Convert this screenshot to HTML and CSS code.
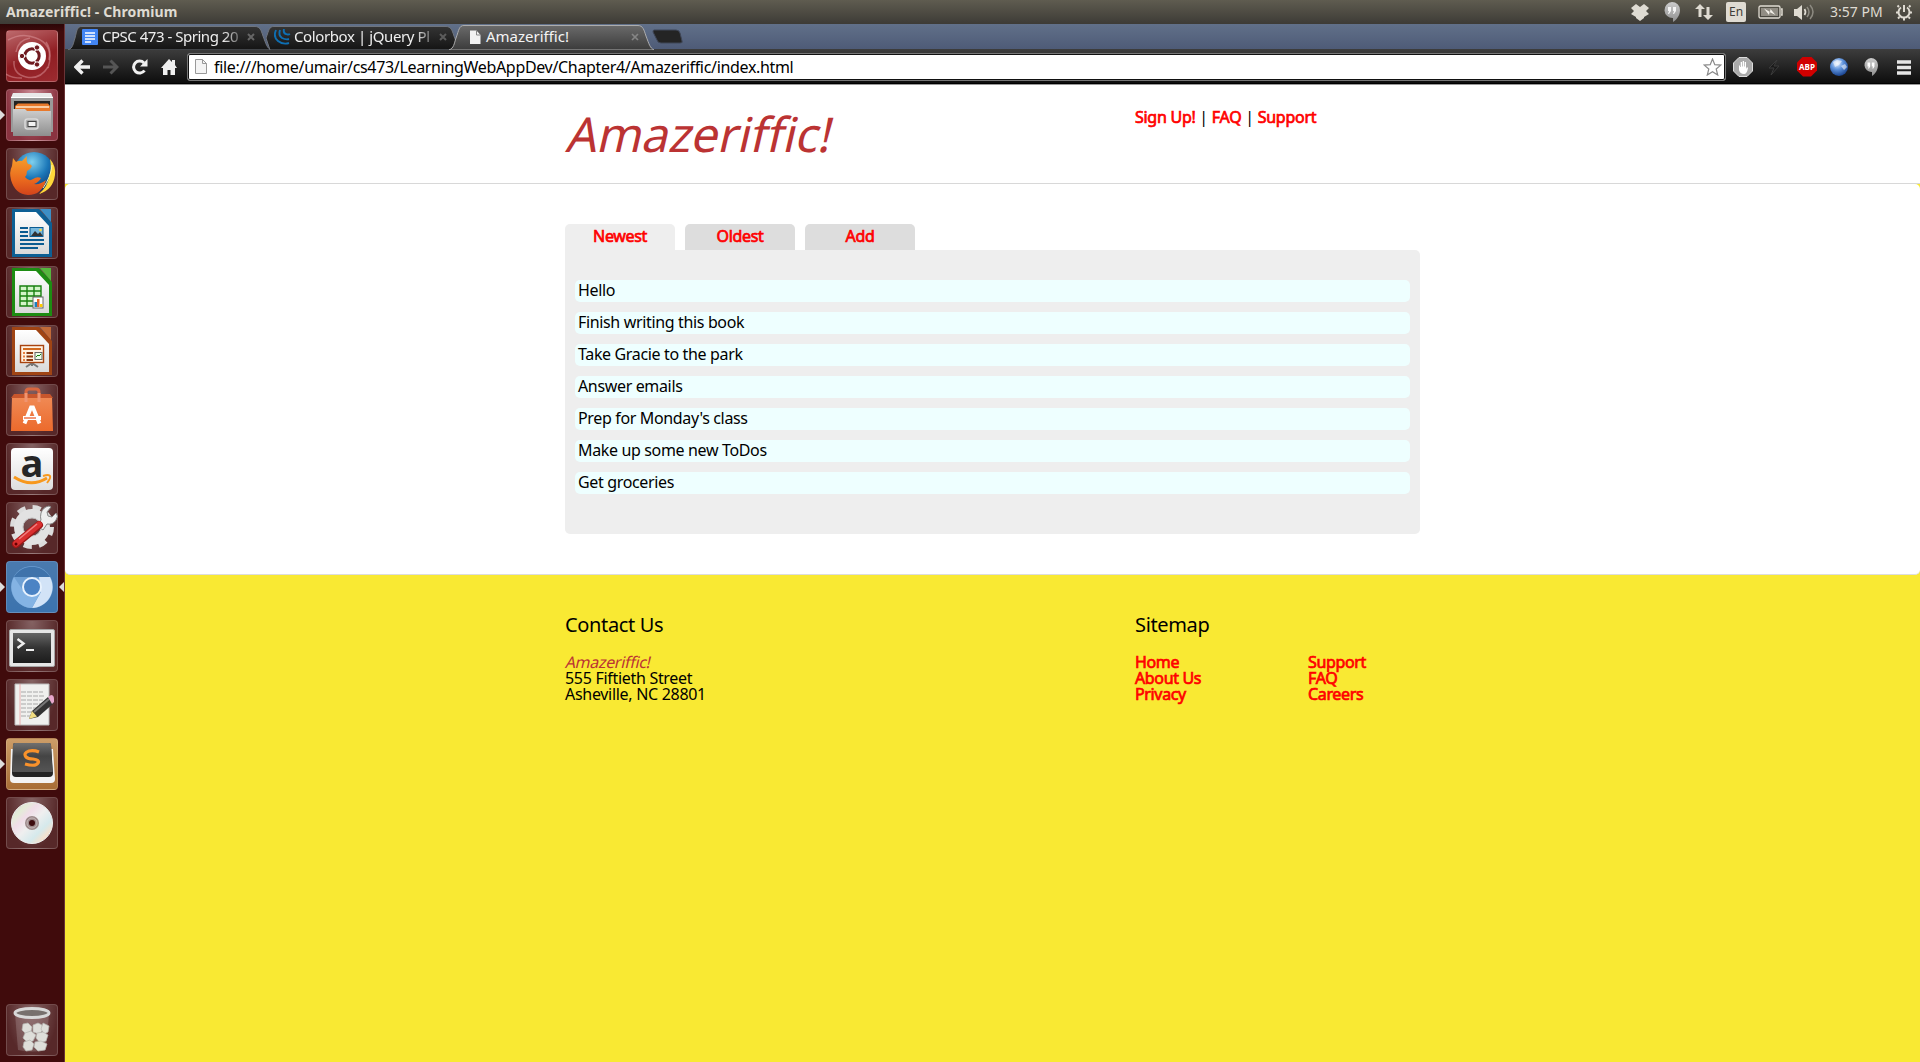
FILE: index.html
```html
<!DOCTYPE html>
<html lang="en">
<head>
<meta charset="utf-8">
<title>Amazeriffic!</title>
<link rel="stylesheet" href="styles.css">
</head>
<body>
<svg class="defs" width="0" height="0">
  <defs>
    <linearGradient id="tabDark" x1="0" y1="0" x2="0" y2="1"><stop offset="0" stop-color="#343434"/><stop offset="1" stop-color="#141414"/></linearGradient>
    <linearGradient id="tabLight" x1="0" y1="0" x2="0" y2="1"><stop offset="0" stop-color="#6a6a6a"/><stop offset="1" stop-color="#3b3b3b"/></linearGradient>
    <linearGradient id="steel" x1="0" y1="0" x2="0" y2="1"><stop offset="0" stop-color="#cfcfcf"/><stop offset="1" stop-color="#8e8e8e"/></linearGradient>
    <linearGradient id="paper" x1="0" y1="0" x2="0" y2="1"><stop offset="0" stop-color="#fff"/><stop offset="1" stop-color="#d9d9d9"/></linearGradient>
    <linearGradient id="bag" x1="0" y1="0" x2="0" y2="1"><stop offset="0" stop-color="#f08a55"/><stop offset="1" stop-color="#ec6a2c"/></linearGradient>
    <linearGradient id="screen" x1="0" y1="0" x2="0" y2="1"><stop offset="0" stop-color="#666"/><stop offset=".5" stop-color="#333"/><stop offset="1" stop-color="#1c1c1c"/></linearGradient>
    <radialGradient id="globe" cx=".45" cy=".25" r=".8"><stop offset="0" stop-color="#7fd0ee"/><stop offset=".5" stop-color="#1b77b8"/><stop offset="1" stop-color="#0b2a66"/></radialGradient>
    <linearGradient id="fox" x1="0" y1="0" x2="0" y2="1"><stop offset="0" stop-color="#f6a12c"/><stop offset=".6" stop-color="#ea6a1e"/><stop offset="1" stop-color="#d2431b"/></linearGradient>
    <linearGradient id="disc" x1="0" y1="0" x2="1" y2="1"><stop offset="0" stop-color="#d8d8d8"/><stop offset=".22" stop-color="#e4ecd8"/><stop offset=".34" stop-color="#f0dde8"/><stop offset=".5" stop-color="#efefef"/><stop offset=".7" stop-color="#d5e9ec"/><stop offset=".82" stop-color="#f3e2cf"/><stop offset="1" stop-color="#dcdcdc"/></linearGradient>
    <radialGradient id="world" cx=".4" cy=".3" r=".75"><stop offset="0" stop-color="#e8f2ff"/><stop offset=".45" stop-color="#5f93dc"/><stop offset="1" stop-color="#123a86"/></radialGradient>
    <linearGradient id="sublime" x1="0" y1="0" x2="0" y2="1"><stop offset="0" stop-color="#6f6f6f"/><stop offset=".45" stop-color="#444"/><stop offset="1" stop-color="#555"/></linearGradient>
    <linearGradient id="bubble" x1="0" y1="0" x2="0" y2="1"><stop offset="0" stop-color="#ccc"/><stop offset="1" stop-color="#8f8f8f"/></linearGradient>
  </defs>
</svg>

<header class="menubar">
  <span class="window-title">Amazeriffic! - Chromium</span>
  <div class="indicators">
    <svg width="20" height="24"><path d="M1 8l5-4 4 3 4-3 5 4-3 3 3 3-5 3v1l-4 3-4-3v-1l-5-3 3-3z" fill="#dfdbd2"/></svg>
    <svg width="18" height="24"><path d="M9 2a8 8 0 0 1 8 8c0 6-4 10-7 12v-4A8 8 0 1 1 9 2z" fill="url(#bubble)"/><path d="M5 7h3v4l-2 3H5l1-3H5zM10 7h3v4l-2 3h-1l1-3h-1z" fill="#f4f4f4"/></svg>
    <svg width="18" height="24"><path d="M5 4L0 9h3.500v8h3V9H10zM13 20l5-5h-3.500V7h-3v8H8z" fill="#dfdbd2"/></svg>
    <span class="lang">En</span>
    <svg width="25" height="24"><rect x="1" y="6" width="21" height="12" rx="1.500" fill="none" stroke="#dfdbd2" stroke-width="1.300"/><rect x="3" y="8" width="17" height="8" fill="#918d84"/><path d="M23 9h1v6h-1" fill="none" stroke="#dfdbd2" stroke-width="1.500"/><path d="M6 8.500l6 3.500.500-3 5 6-6-3-.5 3z" fill="#f2efe8"/></svg>
    <svg width="21" height="24"><path d="M0 9h3l5-4v15l-5-4H0z" fill="#dfdbd2"/><path d="M10.500 9q2 3 0 6" fill="none" stroke="#dfdbd2" stroke-width="1.700"/><path d="M13 7q4 5 0 10M16 5q6 7 0 14" fill="none" stroke="#8d8a81" stroke-width="1.500"/></svg>
    <span class="clock">3:57 PM</span>
    <svg width="18" height="24"><path d="M6 7.500a5.500 5.500 0 1 0 6 0M9 5v7" fill="none" stroke="#dfdbd2" stroke-width="2"/><path d="M4 7L2.500 5.500M14 7l1.500-1.500M3 12.500H1M15 12.500h2M4.500 17L3 18.500M13.500 17l1.500 1.500M9 18v2.500" stroke="#dfdbd2" stroke-width="2"/></svg>
  </div>
</header>

<div class="desktop">
  <nav class="launcher">
    <div class="tile tile-dash"><svg viewBox="0 0 52 52"><g fill="none" stroke="#e5a5a8" stroke-opacity=".45" stroke-width="1.500"><path d="M2 10q14-8 28-2 16 6 13 22"/><path d="M8 31q-1 13 12 16 14 3 22-10"/><path d="M10 22q2-12 14-14M0 44q6 4 16 4M40 12q7 10 2 26"/></g><circle cx="26" cy="26" r="14" fill="#fff"/><circle cx="26" cy="26" r="7.200" fill="none" stroke="#6f1a20" stroke-width="3"/><path d="M26 26L12 26M26 26l7 12M26 26l7-12" stroke="#fff" stroke-width="1.200"/><g fill="#6f1a20" stroke="#fff"><circle cx="16" cy="26" r="2.700"/><circle cx="31" cy="34.500" r="2.700"/><circle cx="31" cy="17.500" r="2.700"/></g><circle cx="26" cy="26" r="5" fill="#fff"/></svg></div>
    <div class="tile tile-files running"><svg viewBox="0 0 52 52"><path d="M7 4h38l2 5v34H5V9z" fill="#9a9a9a"/><path d="M7 4h38l2 5H5z" fill="#e9e9e9"/><path d="M5 8.500h42" stroke="#fff"/><path d="M8 12h36v12H8z" fill="#222"/><path d="M9 17l3-2.500h30l2 2.500v5H9z" fill="#e8792b"/><path d="M10 18h33" stroke="#ffe8cc" stroke-width="1.500"/><path d="M7 20h12l2 2h24v25H7z" fill="url(#steel)"/><rect x="19" y="30" width="13" height="10" rx="2.500" fill="#aaa" stroke="#d9d9d9" stroke-width="1.500"/><rect x="22" y="32.500" width="8" height="5" fill="#f2f2f2" stroke="#444"/></svg></div>
    <div class="tile"><svg viewBox="0 0 52 52"><circle cx="28" cy="24" r="20" fill="url(#globe)"/><path d="M44 11q6 7 5 16-2 15-16 19 9-8 10-17 3-8 1-18z" fill="#ffd83a"/><path d="M46 17q-1 12-9 23" fill="none" stroke="#fff3a8"/><path d="M7 10l3 4q3-2 6-1l5-5q-1 5 1 8 3 0 4 2-1 3-5 5 0 4-2 6 4 5 8 2 4-3 8-1-2 4-7 6 6 1 12-4-4 15-18 15Q9 46 5 32 3 24 6 18z" fill="url(#fox)"/></svg></div>
    <div class="tile"><svg viewBox="0 0 52 52"><path d="M6 2h27l13 14v34H6z" fill="#0d5f94"/><path d="M9 5h21l13 14v28H9z" fill="url(#paper)"/><path d="M34 2h11v13z" fill="#3c8fc6"/><g stroke="#0b5c91" stroke-width="1.800"><path d="M14 21h8M14 25h8M14 29h8M14 33h24M14 37h24M14 41h18"/></g><rect x="24" y="20.500" width="13" height="9" fill="#79b9dd" stroke="#0b5c91"/><path d="M25 29l4-5 3 3 2-2 3 4z" fill="#333"/><circle cx="34.500" cy="23" r="1.300" fill="#ffd83a"/></svg></div>
    <div class="tile"><svg viewBox="0 0 52 52"><path d="M6 2h27l13 14v34H6z" fill="#1d8c12"/><path d="M9 5h21l13 14v28H9z" fill="url(#paper)"/><path d="M34 2h11v13z" fill="#55b73d"/><rect x="14" y="20" width="21" height="20" fill="#d3f5c8"/><path d="M14 20h21v20H14zM14 25h21M14 30h21M14 35h21M21 20v20M28 20v20" fill="none" stroke="#18800f" stroke-width="1.400"/><rect x="27" y="31" width="10" height="11" fill="#fff" stroke="#666"/><path d="M28.500 36h2.500v5h-2.500z" fill="#1d7fc0"/><path d="M31 33h2.500v8H31z" fill="#e8682b"/><path d="M34 38h2.500v3H34z" fill="#fc0"/></svg></div>
    <div class="tile"><svg viewBox="0 0 52 52"><path d="M6 2h27l13 14v34H6z" fill="#a04414"/><path d="M9 5h21l13 14v28H9z" fill="url(#paper)"/><path d="M34 2h11v13z" fill="#c26a38"/><path d="M26 38l-6 4M26 38l6 4M26 37v4" stroke="#777" stroke-width="2"/><rect x="14.500" y="20.500" width="23" height="17" fill="#fff2e2" stroke="#a8430f" stroke-width="1.400"/><path d="M17 24h18" stroke="#d2691e" stroke-width="2"/><path d="M17 28h2M17 31.500h2M17 35h2" stroke="#e88040" stroke-width="2"/><path d="M20.500 28H27M20.500 31.500H27M20.500 35H27" stroke="#8c3a10" stroke-width="2"/><rect x="29" y="27.500" width="7" height="7" fill="#eaffea" stroke="#666"/><path d="M30 32l2-2 1 1 2-2" fill="none" stroke="#18800f"/></svg></div>
    <div class="tile"><svg viewBox="0 0 52 52"><path d="M20 12V8q0-3 3-3h7q3 0 3 3v4" fill="none" stroke="#d9673f" stroke-width="3"/><path d="M6 13h40l1 34H5z" fill="url(#bag)"/><path d="M5 14l3-4h36l3 4z" fill="#c8562c"/><path d="M20 18V9M33 18V9" stroke="#f09470" stroke-width="3"/><path d="M18.500 39.500l6.500-16h2l6.500 16M17 34h18" fill="none" stroke="#fff" stroke-width="3.800"/><path d="M18 34h12" stroke="#e95420" stroke-width="1.200"/></svg></div>
    <div class="tile tile-letter"><span>a</span><svg viewBox="0 0 52 52"><path d="M8 34q17 11 33 1" fill="none" stroke="#f7981d" stroke-width="3"/><path d="M37 33q6-2 7 0t-3 7" fill="none" stroke="#f7981d" stroke-width="2"/></svg></div>
    <div class="tile"><svg viewBox="0 0 52 52"><circle cx="26" cy="25" r="19" fill="none" stroke="#dcdcdc" stroke-width="6" stroke-dasharray="8 6.920"/><circle cx="26" cy="25" r="13.500" fill="none" stroke="#e2e2e2" stroke-width="9"/><circle cx="26" cy="25" r="9" fill="none" stroke="#bdbdbd"/><path d="M31 24l4-6q-1-3 0-7 2-6 8-7l2 1-4 5 1 4 4 1 4-4q3 3 0 7-3 5-9 4l-4 6z" fill="#eee" stroke="#888"/><path d="M33 23L10 42" stroke="#9e1616" stroke-width="8" stroke-linecap="round"/><path d="M33 22.500L10 41.500" stroke="#d92f2f" stroke-width="6" stroke-linecap="round"/><path d="M31 22L13 37" stroke="#f08080" stroke-width="1.500"/><circle cx="10" cy="42" r="1.500" fill="#600"/></svg></div>
    <div class="tile tile-chromium running focused"><svg viewBox="0 0 52 52"><circle cx="26" cy="26" r="21" fill="#6ea0d4"/><path d="M8 16a21 21 0 0 1 36 0H26z" fill="#3f73ab"/><path d="M44 16a21 21 0 0 1-18 31l9-16-2-15z" fill="#d2e3f7"/><path d="M8 16a21 21 0 0 0 18 31l8-15-16-1z" fill="#84b3e4"/><circle cx="26" cy="26" r="9" fill="#4b83c4" stroke="#e8f2fd" stroke-width="2"/></svg></div>
    <div class="tile"><svg viewBox="0 0 52 52"><rect x="3.500" y="9.500" width="45" height="37" rx="1.500" fill="#e6e6e6" stroke="#a5a5a5"/><rect x="7" y="13" width="38" height="30" fill="url(#screen)"/><path d="M11.500 19l6 4.500-6 4.500" fill="none" stroke="#eee" stroke-width="2.400"/><path d="M20 30h8" stroke="#eee" stroke-width="2"/></svg></div>
    <div class="tile"><svg viewBox="0 0 52 52"><path d="M9 5h34v41H9z" fill="#f0f0ee" stroke="#bbb"/><path d="M14 5v41" stroke="#eaa0a0" stroke-width=".8"/><path d="M15 13h22M15 17h23M15 21h22M15 25h20M15 29h18M15 33h12M15 37h10" stroke="#a8a8a8" stroke-dasharray="5 1"/><path d="M23 40l3-8 16-14 6 6-16 14z" fill="#333"/><path d="M23 40l3-8 5 5.500z" fill="#f0dc80"/><path d="M28 33l15-13" stroke="#777" stroke-width="2"/><path d="M42 18l3-2q3 0 3 4v3l-2 2z" fill="#e7a7cb"/></svg></div>
    <div class="tile tile-sublime running"><svg viewBox="0 0 52 52"><path d="M5 11h42l2 30q0 4-4 4H8q-4 0-4-4z" fill="#f3f3f3"/><path d="M9 5h34q2 0 2 2l2 28q0 4-4 4H10q-4 0-4-4L7 7q0-2 2-2z" fill="#242424"/><path d="M9 5h34q2 0 2 2l1.500 27H6.500L7 7q0-2 2-2z" fill="url(#sublime)"/><path d="M33 14q-5-2-10-1-6 2-3 6 2 2 7 2 7 1 5 4-2 4-13 1" fill="none" stroke="#f9922b" stroke-width="3.200"/></svg></div>
    <div class="tile"><svg viewBox="0 0 52 52"><circle cx="26" cy="26" r="20.500" fill="url(#disc)" stroke="#eee"/><circle cx="26" cy="26" r="7" fill="#9c8a8b"/><circle cx="26" cy="26" r="5" fill="none" stroke="#c5b7b8"/><circle cx="26" cy="26" r="3" fill="#3d0c0f"/></svg></div>
    <div class="tile tile-trash"><svg viewBox="0 0 52 52"><path d="M9 10l3 36q14 3 28 0l3-36z" fill="#fff" fill-opacity=".16"/><g fill="#deded9" stroke="#b5b5b0" stroke-width=".7"><path d="M17 20l5-1 4 4-1 5-5 2-4-4z"/><path d="M27 21l5-2 4 2 1 5-4 4-6-2z"/><path d="M37 19l6 3-1 6-4 2-3-5z"/><path d="M19 29l6-2 5 4-3 6-6 1-4-4z"/><path d="M31 29l6-1 5 3-2 6-6 2-4-5z"/><path d="M18 38l6-2 4 4-2 6-6 1-3-4z"/><path d="M29 38l6-1 6 3-2 6-7 1-4-4z"/></g><ellipse cx="26" cy="9" rx="17" ry="4.500" fill="#77706d" stroke="#d8d8d8" stroke-width="3"/></svg></div>
  </nav>

  <section class="browser">
    <div class="tabstrip">
      <div class="tab tab-first">
        <svg class="tab-shape" viewBox="0 0 206 26"><path d="M0 26C5 24 5 20 7 14 9 6 9 2.500 14 2.500H187C192 2.500 193 6 195 12 198 20 199 24 203 26z" fill="url(#tabDark)" stroke="#6f747c"/></svg>
        <svg class="favicon" width="16" height="16"><rect width="16" height="16" rx="1" fill="#4285f4"/><path d="M3 4h10M3 7h10M3 10h10M3 13h6" stroke="#fff" stroke-width="1.300"/></svg>
        <span class="tab-text tight faded">CPSC 473 - Spring 20</span>
        <svg class="close" width="8" height="8"><path d="M1 1l6 6M7 1L1 7" stroke="#666" stroke-width="2"/></svg>
      </div>
      <div class="tab tab-second">
        <svg class="tab-shape" viewBox="0 0 206 26"><path d="M4 26 0 14C3 6 3 2.500 8 2.500H180C185 2.500 186 6 188 12 191 20 192 24 196 26z" fill="url(#tabDark)" stroke="#6f747c"/></svg>
        <svg class="favicon" width="17" height="16"><g fill="none" stroke="#0e6fb3" stroke-width="1.900"><path d="M2 1q-3 7 2 11 5 4 11 2"/><path d="M6 1q-2 5 2 8 4 2 7 1"/><path d="M10 0q-1 4 2 5 2 1 4 0"/></g></svg>
        <span class="tab-text tight faded">Colorbox | jQuery Pl</span>
        <svg class="close" width="8" height="8"><path d="M1 1l6 6M7 1L1 7" stroke="#5c5c5c" stroke-width="2"/></svg>
      </div>
      <div class="tab tab-active">
        <svg class="tab-shape" viewBox="0 0 206 26"><path d="M0 26C5 24 5 20 7 14 10 6 10 1.500 15 1.500H189C194 1.500 195 6 197 12 200 20 201 24 205 26z" fill="url(#tabLight)" stroke="#adadad"/></svg>
        <svg class="favicon" width="12" height="14"><path d="M1 .5h6.500L11.500 5v9H1z" fill="#f2f2f2"/><path d="M7.500.500V5h4" fill="none" stroke="#888"/></svg>
        <span class="tab-text">Amazeriffic!</span>
        <svg class="close" width="8" height="8"><path d="M1 1l6 6M7 1L1 7" stroke="#858585" stroke-width="1.700"/></svg>
      </div>
      <svg class="newtab" width="31" height="16"><path d="M2 1h22q3 0 4 3l2 8q1 2-2 2H9q-3 0-4-3L1 3q0-2 1-2z" fill="#242424" stroke="#3f4656"/></svg>
    </div>

    <div class="toolbar">
      <div class="nav-icons">
        <svg width="16" height="16"><path d="M8.500 1.500L2 8l6.500 6.500M2.500 8H16" fill="none" stroke="#f0f0f0" stroke-width="3.400"/></svg>
        <svg width="16" height="16"><path d="M7.500 1.500L14 8l-6.500 6.500M13.500 8H0" fill="none" stroke="#555" stroke-width="3"/></svg>
        <svg width="16" height="16"><path d="M12.500 11.500A6 6 0 1 1 12 4" fill="none" stroke="#f0f0f0" stroke-width="3"/><path d="M15.500 0v7.500H8z" fill="#f0f0f0"/></svg>
        <svg width="16" height="16"><path d="M8 0l3 3V1h3v5l2 3h-2v7H9.500v-5h-3v5H2V9H0z" fill="#f0f0f0"/></svg>
      </div>
      <div class="omnibox">
        <svg class="page-icon" width="12" height="15"><path d="M.5.5h7l4 4v10H.500z" fill="#f4f4f4" stroke="#999"/><path d="M7.500.500v4h4" fill="none" stroke="#999"/></svg>
        <span class="url">file:///home/umair/cs473/LearningWebAppDev/Chapter4/Amazeriffic/index.html</span>
        <svg width="19" height="18"><path d="M9.500 1l2.300 5.700 6 .4-4.600 3.900 1.500 6-5.200-3.300L4.300 17l1.500-6L1.200 7.100l6-.4z" fill="#fff" stroke="#8a8a8a" stroke-width="1.200"/></svg>
      </div>
      <div class="extensions">
        <svg width="20" height="20"><path d="M6 .5h8L19.500 6v8L14 19.500H6L.500 14V6z" fill="#aaa" stroke="#ddd"/><path d="M6 9v4q1 4 5 4 3 0 4-6l-1-1-1 2V5h-1.300v4.500h-.7V4H9.700v5.500H9V5H7.700v5H7V8z" fill="#fff"/></svg>
        <svg width="12" height="18"><path d="M9 2L1 10h5l-3 7 8-9H6z" fill="#1a1a1a" stroke="#3b3b3b"/></svg>
        <div class="abp">ABP</div>
        <svg width="20" height="20"><circle cx="10" cy="10" r="9" fill="url(#world)"/><path d="M4 5l4-2 5 1-3 4-4 2zM12 9l4-2 2 3-3 3z" fill="#fff" fill-opacity=".55"/></svg>
        <svg width="16" height="20"><path d="M8 1a7 7 0 0 1 7 7c0 5-3 9-6 11v-4A7 7 0 1 1 8 1z" fill="url(#bubble)"/><path d="M4.500 5.500h2.700v4L6 11.500H5l.7-2H4.500zM8.800 5.500h2.700v4l-1.200 2h-1l.7-2H8.800z" fill="#fff"/></svg>
        <svg width="14" height="16"><path d="M0 3h14M0 8.500h14M0 14h14" stroke="#e6e6e6" stroke-width="3.400"/></svg>
      </div>
    </div>

    <div class="page">
      <header class="site-header">
        <div class="container header-row">
          <h1><span class="oblique">Amazeriffic!</span></h1>
          <nav class="links"><a>Sign Up!</a> | <a>FAQ</a> | <a>Support</a></nav>
        </div>
      </header>
      <main>
        <div class="container">
          <div class="tabs"><a class="active">Newest</a><a>Oldest</a><a>Add</a></div>
          <ul class="content">
            <li>Hello</li>
            <li>Finish writing this book</li>
            <li>Take Gracie to the park</li>
            <li>Answer emails</li>
            <li>Prep for Monday's class</li>
            <li>Make up some new ToDos</li>
            <li>Get groceries</li>
          </ul>
        </div>
      </main>
      <footer>
        <div class="container footer-row">
          <div class="contact">
            <h2>Contact Us</h2>
            <p><span class="oblique brand">Amazeriffic!</span></p>
            <p>555 Fiftieth Street</p>
            <p>Asheville, NC 28801</p>
          </div>
          <div class="sitemap">
            <h2>Sitemap</h2>
            <div class="columns">
              <div><a>Home</a><a>About Us</a><a>Privacy</a></div>
              <div><a>Support</a><a>FAQ</a><a>Careers</a></div>
            </div>
          </div>
        </div>
      </footer>
    </div>
  </section>
</div>
</body>
</html>
```
FILE: styles.css
```css
* { box-sizing: border-box; margin: 0; padding: 0; }
body {
  width: 1920px;
  height: 1062px;
  overflow: hidden;
  display: flex;
  flex-direction: column;
  font-family: "Noto Sans", "Open Sans", sans-serif;
}
svg { display: block; flex: none; }
.defs { position: absolute; }

/* Top panel */
.menubar {
  height: 24px;
  flex: none;
  display: flex;
  align-items: center;
  justify-content: space-between;
  padding: 0 7px 0 6px;
  background: linear-gradient(#5f5c50, #3d3b36);
  color: #dfdbd2;
  line-height: 24px;
}
.window-title { font-size: 14px; font-weight: bold; letter-spacing: .12px; }
.indicators { display: flex; align-items: center; }
.indicators svg:nth-child(1) { margin-right: 13px; }
.indicators svg:nth-child(2) { margin-right: 14px; }
.indicators svg:nth-child(3) { margin-right: 13px; }
.lang {
  width: 20px;
  height: 20px;
  margin-right: 12px;
  border-radius: 2px;
  background: #dfdbd2;
  color: #3f3d38;
  font-size: 12px;
  line-height: 20px;
  text-align: center;
}
.indicators svg:nth-child(5) { margin-right: 11px; }
.indicators svg:nth-child(6) { margin-right: 15px; }
.clock { width: 65px; font-size: 14px; white-space: nowrap; }

.desktop { flex: 1; display: flex; min-height: 0; }

/* Launcher */
.launcher {
  width: 65px;
  flex: none;
  display: flex;
  flex-direction: column;
  gap: 7px;
  padding: 6px;
  background: linear-gradient(#2c0607, #400b0c 8px);
  border-right: 1px solid #6b3437;
}
.tile {
  position: relative;
  width: 52px;
  height: 52px;
  flex: none;
  border: 1px solid rgba(255, 255, 255, .16);
  border-radius: 4px;
  background: radial-gradient(ellipse at 50% 0, rgba(255, 255, 255, .36), rgba(255, 255, 255, .12) 75%);
}
.tile svg { width: 52px; height: 52px; margin: -1px; }
.tile-dash { background: linear-gradient(160deg, #bd6a6d, #8f1d22 55%, #9c2b30); }
.tile-files { background: radial-gradient(ellipse at 50% 0, #c98992, #8a3340 75%); }
.tile-chromium { background: linear-gradient(#4a7aae, #3c73ae); }
.tile-sublime { background: linear-gradient(#cc9d68, #a86d35); }
.tile-trash { margin-top: auto; }
.tile-letter span {
  position: absolute;
  left: 4px;
  top: 4px;
  width: 42px;
  height: 42px;
  border-radius: 4px;
  background: linear-gradient(#fff, #dedede);
  color: #262626;
  font: bold 38px/28px "Open Sans", sans-serif;
  text-align: center;
}
.tile-letter svg { position: relative; }
.running::before {
  content: "";
  position: absolute;
  left: -7px;
  top: 20px;
  border: 5px solid transparent;
  border-left-color: #ddd;
  border-right: 0;
}
.focused::after {
  content: "";
  position: absolute;
  right: -7px;
  top: 20px;
  border: 5px solid transparent;
  border-right-color: #ddd;
  border-left: 0;
}

/* Browser chrome */
.browser { flex: 1; display: flex; flex-direction: column; min-width: 0; }
.tabstrip {
  height: 25px;
  flex: none;
  display: flex;
  background: linear-gradient(#617089, #4e5b77);
}
.tab {
  position: relative;
  width: 206px;
  height: 25px;
  flex: none;
  display: flex;
  align-items: center;
  color: #eee;
}
.tab-shape { position: absolute; left: 0; top: 0; width: 206px; height: 26px; }
.favicon, .tab-text, .close { position: relative; }
.tab-first { margin-left: 3px; padding-left: 14px; }
.tab-second { margin-left: -8px; padding-left: 8px; }
.tab-active { margin-left: -23px; padding-left: 20px; z-index: 1; }
.tab-text { width: 138px; margin-left: 4px; font-size: 15px; line-height: 25px; white-space: nowrap; }
.tab-second .tab-text { margin-left: 3px; letter-spacing: -.4px; }
.tab-active .tab-text { width: 144px; margin-left: 5px; color: #f4f4f4; }
.tight { letter-spacing: -.48px; }
.faded { -webkit-mask-image: linear-gradient(90deg, #000 88%, rgba(0, 0, 0, .3)); mask-image: linear-gradient(90deg, #000 88%, rgba(0, 0, 0, .3)); }
.close { margin-left: 7px; }
.tab-active .close { margin-left: 1px; }
.newtab { margin: 5px 0 0 -3px; }

.toolbar {
  height: 36px;
  flex: none;
  display: flex;
  align-items: center;
  background: linear-gradient(#3d3d3d, #0d0d0d 34px, #000 34px, #000 35px, #999 35px);
  padding: 0 0 1px 9px;
}
.nav-icons { display: flex; gap: 13px; width: 113px; }
.omnibox {
  width: 1539px;
  height: 28px;
  display: flex;
  align-items: center;
  padding: 0 3px 0 7px;
  border: 1px solid #777;
  border-radius: 3px;
  background: #fff;
  box-shadow: inset 0 0 0 1px #111;
}
.url { flex: 1; margin-left: 7px; font-size: 16px; line-height: 24px; letter-spacing: -.33px; white-space: nowrap; }
.extensions { display: flex; align-items: center; margin-left: 7px; }
.extensions > :nth-child(1) { margin-right: 15px; }
.extensions > :nth-child(2) { margin-right: 17px; }
.extensions > :nth-child(3) { margin-right: 12px; }
.extensions > :nth-child(4) { margin-right: 14px; }
.extensions > :nth-child(5) { margin-right: 18px; }
.abp {
  width: 20px;
  height: 20px;
  background: #d00000;
  clip-path: polygon(30% 0, 70% 0, 100% 30%, 100% 70%, 70% 100%, 30% 100%, 0 70%, 0 30%);
  color: #fff;
  font: bold 8px/20px "Open Sans", sans-serif;
  text-align: center;
}

/* Amazeriffic page */
.page { flex: 1; background: #f9e933; font-size: 16px; letter-spacing: -.35px; color: #000; }
.container { width: 855px; margin-left: 500px; }
.site-header { height: 99px; background: #fff; border-bottom: 1px solid #d8d8d8; }
.header-row { display: flex; }
h1 { width: 570px; padding: 25px 0 0 1px; color: #b33; font-size: 48px; line-height: 48px; font-weight: normal; letter-spacing: -.1px; }
.oblique { display: inline-block; transform: skewX(-13deg); transform-origin: 0 78%; }
.links { padding-top: 21px; line-height: 22px; letter-spacing: -.27px; }
a { color: #f00; -webkit-text-stroke: .7px #f00; }
main { height: 391px; padding-top: 40px; background: #fff; border-bottom: 1px solid #ddd; border-radius: 5px; }
.tabs { display: flex; gap: 10px; }
.tabs a { width: 110px; height: 26px; border-radius: 5px 5px 0 0; background: #ddd; line-height: 24px; text-align: center; }
.tabs .active { background: #eee; }
.content {
  height: 284px;
  display: flex;
  flex-direction: column;
  gap: 10px;
  padding: 30px 10px;
  border-radius: 0 5px 5px 5px;
  background: #eee;
  list-style: none;
}
.content li { height: 22px; padding-left: 3px; border-radius: 5px; background: #eff; line-height: 21px; }
.footer-row { display: flex; padding-top: 38px; }
.contact, .sitemap { width: 570px; flex: none; }
.contact { letter-spacing: -.3px; }
h2 { margin-bottom: 17px; font-size: 20px; line-height: 24px; font-weight: normal; letter-spacing: -.35px; }
.contact p, .columns a { display: block; height: 16px; line-height: 16px; }
.brand { color: #b33; }
.columns { display: flex; }
.columns div { width: 173px; }
```
